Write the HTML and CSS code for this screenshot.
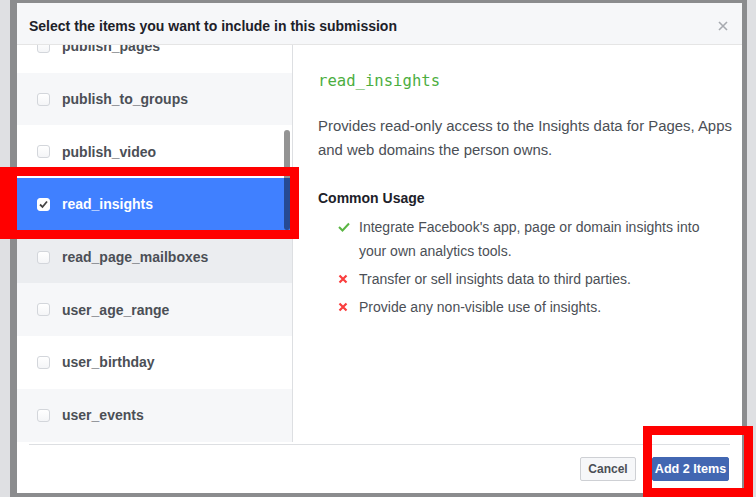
FILE: index.html
```html
<!DOCTYPE html>
<html>
<head>
<meta charset="utf-8">
<link rel="stylesheet" href="styles.css">
</head>
<body>
<div class="stage">
  <div class="modal">
    <div class="hd">
      <span class="hd-title">Select the items you want to include in this submission</span>
      <span class="close"><svg width="10" height="10" viewBox="0 0 10 10"><path d="M1 1L9 9M9 1L1 9" stroke="#a7aab0" stroke-width="1.6" fill="none"/></svg></span>
    </div>
    <div class="bd">
      <div class="list">
        <div class="rows">
          <div class="row"><span class="cb"></span>publish_pages</div>
          <div class="row alt"><span class="cb"></span>publish_to_groups</div>
          <div class="row"><span class="cb"></span>publish_video</div>
          <div class="row sel"><span class="cb on"><svg width="11" height="11" viewBox="0 0 11 11"><path d="M2 5.5L4.5 8L9 2.5" stroke="#444" stroke-width="1.8" fill="none"/></svg></span>read_insights</div>
          <div class="row hover"><span class="cb"></span>read_page_mailboxes</div>
          <div class="row alt"><span class="cb"></span>user_age_range</div>
          <div class="row"><span class="cb"></span>user_birthday</div>
          <div class="row alt"><span class="cb"></span>user_events</div>
        </div>
        <div class="thumb"></div>
      </div>
      <div class="detail">
        <div class="perm-name">read_insights</div>
        <p class="desc">Provides read-only access to the Insights data for Pages, Apps and web domains the person owns.</p>
        <h4 class="usage-title">Common Usage</h4>
        <ul class="usage">
          <li><span class="ic"><svg width="12" height="10" viewBox="0 0 12 10"><path d="M1 5L4.5 8.5L11 1.5" stroke="#5ab543" stroke-width="2" fill="none"/></svg></span><span>Integrate Facebook's app, page or domain insights into your own analytics tools.</span></li>
          <li><span class="ic"><svg width="10" height="10" viewBox="0 0 10 10"><path d="M1.5 1.5L8.5 8.5M8.5 1.5L1.5 8.5" stroke="#fa3e3e" stroke-width="2.2" fill="none"/></svg></span><span>Transfer or sell insights data to third parties.</span></li>
          <li><span class="ic"><svg width="10" height="10" viewBox="0 0 10 10"><path d="M1.5 1.5L8.5 8.5M8.5 1.5L1.5 8.5" stroke="#fa3e3e" stroke-width="2.2" fill="none"/></svg></span><span>Provide any non-visible use of insights.</span></li>
        </ul>
      </div>
    </div>
    <div class="ft">
      <button class="btn">Cancel</button>
      <button class="btn primary">Add 2 Items</button>
    </div>
  </div>
</div>
<div class="mark mark1"></div>
<div class="mark mark2"></div>
</body>
</html>
```
FILE: styles.css
```css
html, body { margin: 0; padding: 0; }
body {
  width: 756px;
  height: 497px;
  overflow: hidden;
  background: #dfe0e3;
  font-family: "Liberation Sans", Arial, sans-serif;
  position: relative;
}
.stage {
  margin-left: 10px;
  width: 737px;
  height: 497px;
  box-sizing: border-box;
  padding: 3px 5px 4px 7px;
  background: #8b8c8e;
}
.modal {
  background: #fff;
  height: 490px;
  display: flex;
  flex-direction: column;
}
.hd {
  height: 41px;
  box-sizing: border-box;
  flex: none;
  border-bottom: 1px solid #e5e5e5;
  background: #f6f7f9;
  display: flex;
  align-items: center;
  justify-content: space-between;
  padding: 4px 14px 0 12px;
  height: 42px;
}
.hd-title {
  font-size: 14px;
  font-weight: bold;
  color: #1d2129;
}
.close { display: flex; }
.bd {
  height: 397px;
  flex: none;
  display: flex;
}
.list {
  width: 275px;
  flex: none;
  border-right: 1px solid #dddfe2;
  overflow: hidden;
  position: relative;
}
.rows { margin-top: -25px; }
.row {
  height: 52.7px;
  display: flex;
  align-items: center;
  gap: 12px;
  padding-left: 20px;
  font-size: 14px;
  font-weight: bold;
  color: #4b4f56;
  background: #fff;
}
.row.alt { background: #f6f7f9; }
.row.hover { background: #ebedf0; }
.row.sel { background: #4080ff; color: #fff; }
.cb {
  width: 13px;
  height: 13px;
  box-sizing: border-box;
  border: 1px solid #d3d6db;
  border-radius: 3px;
  background: linear-gradient(#fff, #f4f5f7);
  display: flex;
  align-items: center;
  justify-content: center;
}
.cb.on { background: #fff; border-color: #fff; }
.thumb {
  position: absolute;
  left: 267px;
  top: 85px;
  width: 6px;
  height: 100px;
  border-radius: 3px;
  background: rgba(0, 0, 0, 0.42);
}
.detail {
  flex: 1;
  padding: 26px 8px 0 25px;
}
.perm-name {
  font-family: "DejaVu Sans Mono", "Liberation Mono", monospace;
  font-size: 15.6px;
  line-height: 20px;
  color: #4cae3f;
}
.desc {
  margin: 23px 0 0;
  font-size: 14.9px;
  line-height: 24px;
  color: #4b4f56;
}
.usage-title {
  margin: 24px 0 0;
  font-size: 14px;
  line-height: 24px;
  font-weight: bold;
  color: #1d2129;
}
.usage {
  list-style: none;
  margin: 5px 0 0;
  padding: 0 20px 0 20px;
}
.usage li {
  display: flex;
  font-size: 14px;
  line-height: 24px;
  color: #4b4f56;
  margin-bottom: 4px;
}
.ic {
  width: 21px;
  flex: none;
  display: flex;
  align-items: center;
  height: 24px;
}
.ft {
  margin: 2px 12px 0;
  border-top: 1px solid #dddfe2;
  flex: 1;
  display: flex;
  justify-content: flex-end;
  align-items: center;
  gap: 16px;
  padding-right: 1px;
}
.btn {
  height: 24px;
  box-sizing: border-box;
  border-radius: 2px;
  font-family: "Liberation Sans", Arial, sans-serif;
  font-size: 12px;
  font-weight: bold;
  padding: 0;
  width: 56px;
  border: 1px solid #ced0d4;
  background: #f6f7f9;
  color: #4b4f56;
}
.btn.primary {
  width: 77px;
  font-size: 12.6px;
  background: #4267b2;
  border-color: #4267b2;
  color: #fff;
}
.mark {
  position: absolute;
  box-sizing: border-box;
  border: 9px solid #ff0000;
}
.mark1 {
  left: 0;
  top: 167px;
  width: 299px;
  height: 72px;
  border-left-width: 17px;
}
.mark2 {
  left: 643px;
  top: 426px;
  width: 110px;
  height: 71px;
}
```
